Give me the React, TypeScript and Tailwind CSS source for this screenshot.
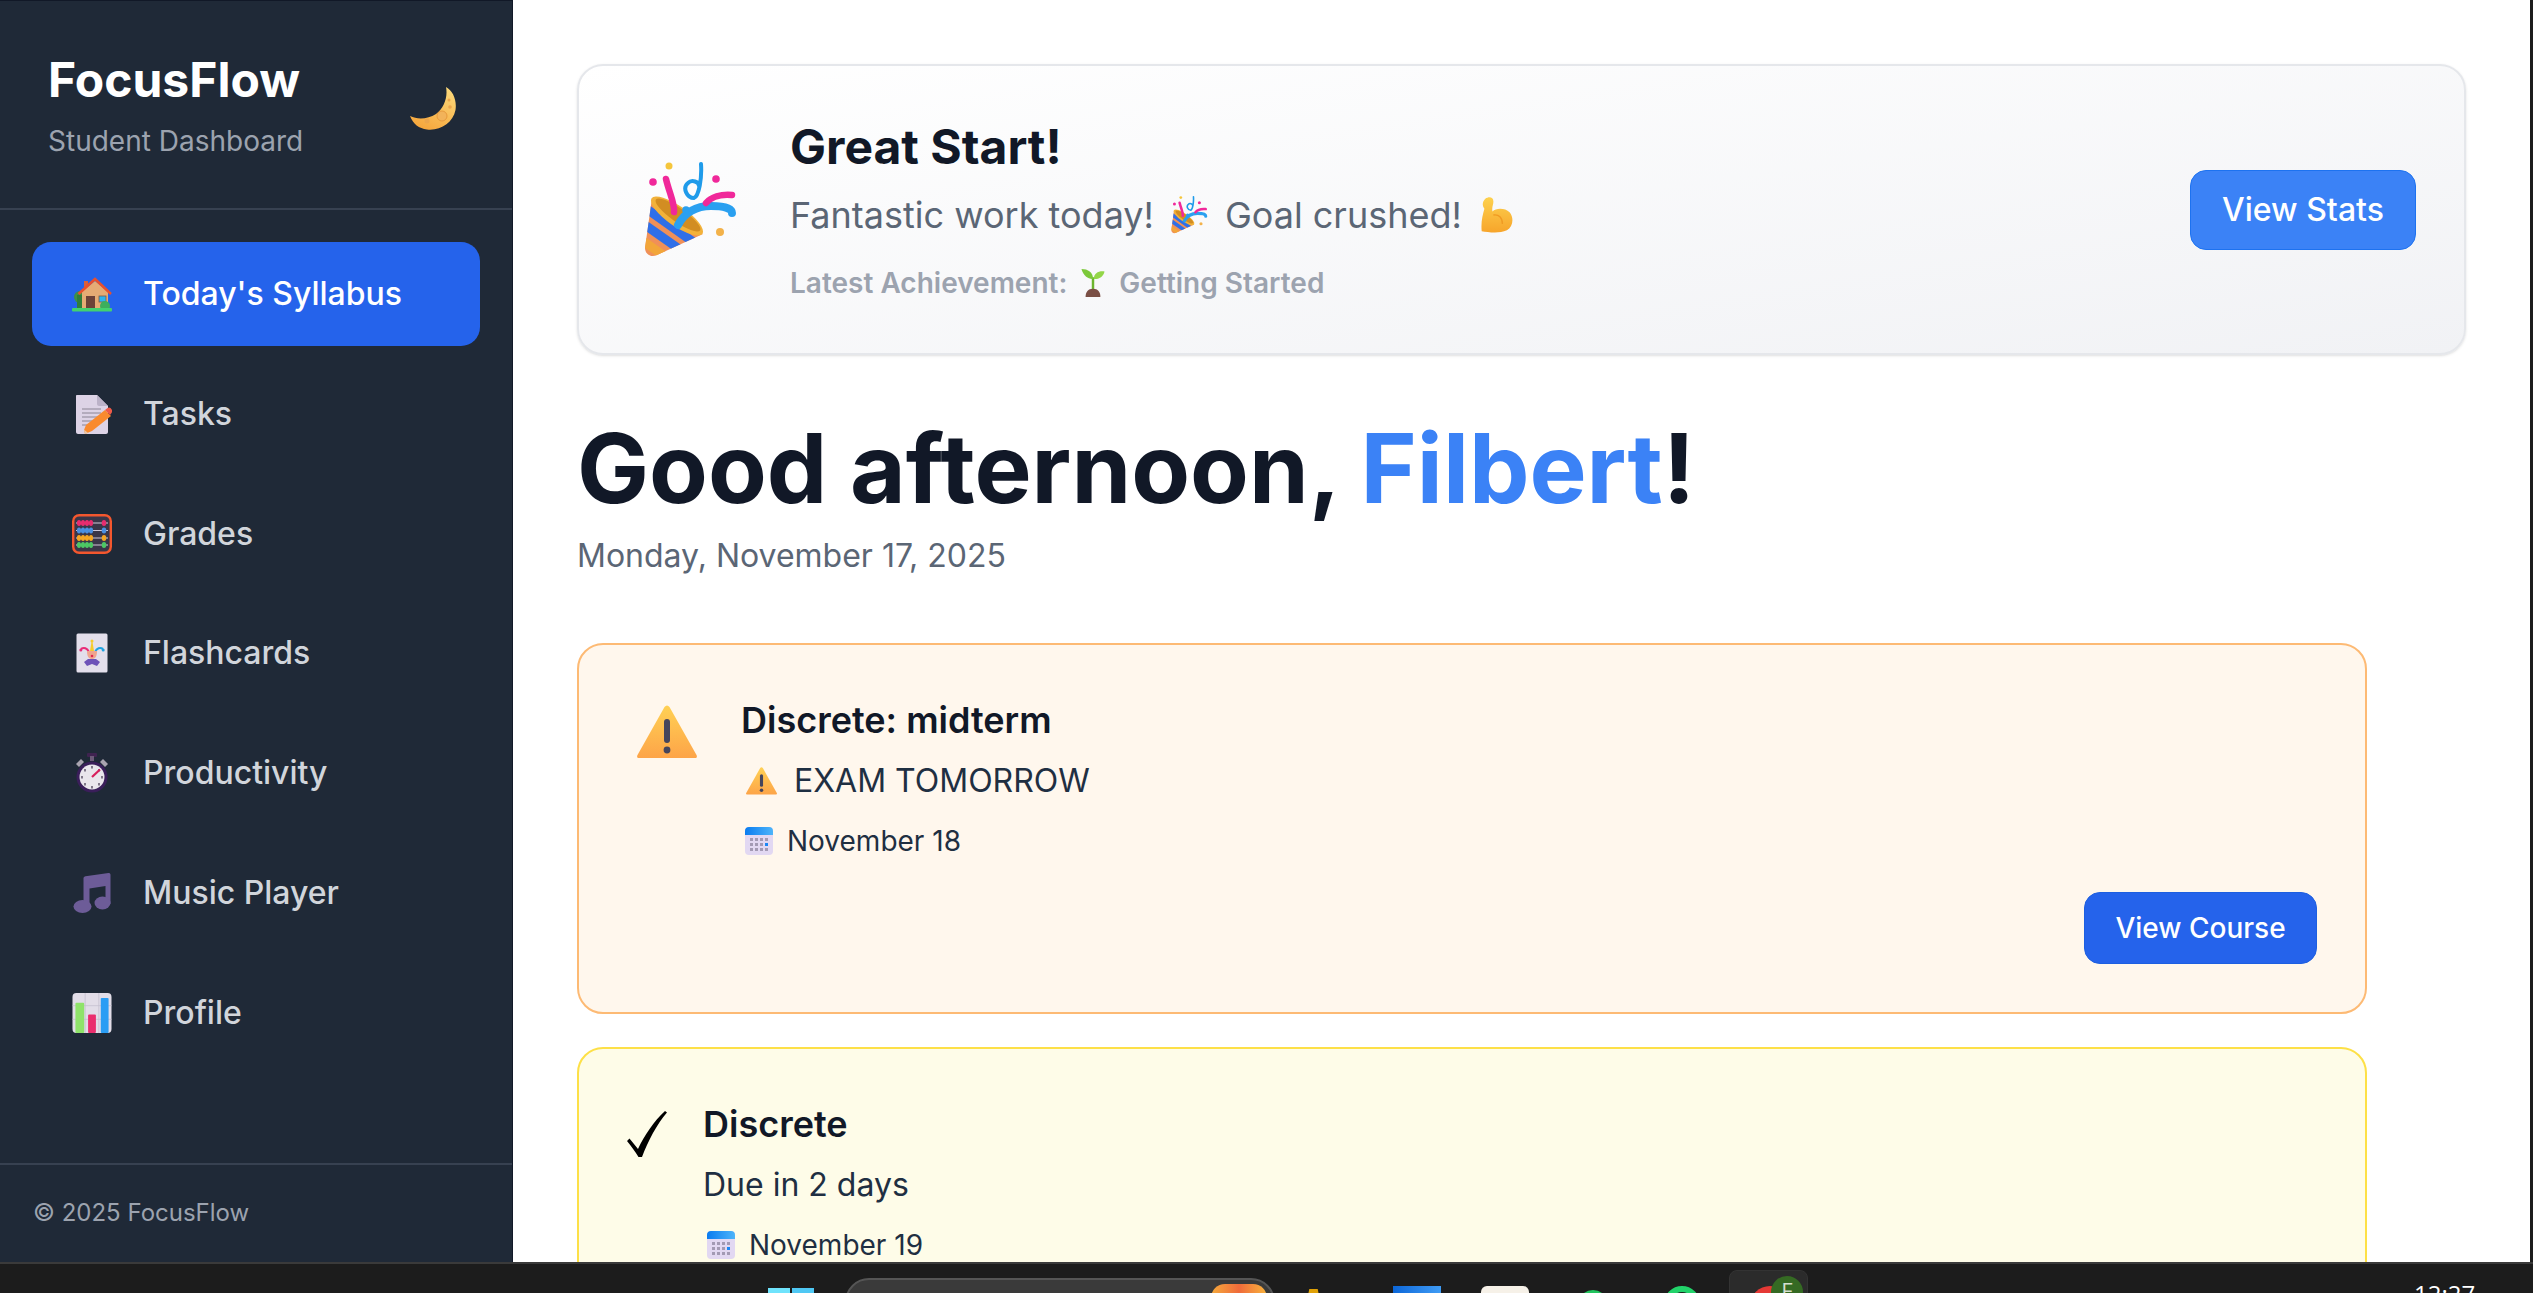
type IconProps = { className?: string };

function Moon({ className }: IconProps) {
  return (
    <svg viewBox="0 0 46 43" className={className}>
      <defs>
        <linearGradient id="moon" x1="0.8" y1="0" x2="0.3" y2="1">
          <stop offset="0" stopColor="#fcd97a" />
          <stop offset="1" stopColor="#f6a63c" />
        </linearGradient>
      </defs>
      <path d="M36 0C43 4 47 13 45.500 23C43 36 30 44 17 42.500C9 41.500 3 37 0 29C8 33 18 32 26 27C34 21 38 10 36 0Z" fill="url(#moon)" />
      <circle cx="32" cy="29" r="5" fill="#f2b35a" stroke="#e79a3c" strokeWidth="1" />
      <circle cx="17" cy="34" r="2.500" fill="#eda64c" />
      <circle cx="40" cy="20" r="1.800" fill="#eda64c" />
      <circle cx="39" cy="13" r="1.500" fill="#eda64c" />
    </svg>
  );
}

function House({ className }: IconProps) {
  return (
    <svg viewBox="0 2 40 35" className={className}>
      <circle cx="8" cy="22" r="6" fill="#3f8f46" />
      <rect x="5" y="20" width="6" height="13" fill="#2f7d3c" />
      <rect x="12" y="6" width="4" height="10" fill="#d9603a" />
      <path d="M10 17L23 6L36 17V34H10Z" fill="#e6ab74" />
      <path d="M6.500 19L23 4L39 19" fill="none" stroke="#e9502c" strokeWidth="2.500" />
      <rect x="14" y="21" width="9" height="13" fill="#6d4238" />
      <rect x="27" y="21" width="7" height="6" fill="#2db4ee" stroke="#7d5a44" strokeWidth="0.800" />
      <circle cx="33" cy="31" r="5" fill="#3dae5c" />
      <rect x="0" y="33" width="40" height="3.500" rx="1" fill="#43d16f" />
    </svg>
  );
}

function Memo({ className }: IconProps) {
  return (
    <svg viewBox="0 0 40 40" className={className}>
      <path d="M5 1H25L36 12V38C36 39 35 40 34 40H6C5 40 4 39 4 38V2C4 1 4.500 1 5 1Z" fill="#ddd3e6" />
      <path d="M25 1L36 12H27C26 12 25 11 25 10Z" fill="#bcb2c8" />
      <path d="M10 15H29M10 19H29M10 23H26M10 27H20M10 31H15" stroke="#8b8494" strokeWidth="1" />
      <path d="M12 36L14 31L33 16L39 22L20 37L13 40Z" fill="#f98a2e" />
      <path d="M33 16L35.500 14C36.500 13.200 37.500 13.200 38.500 14L40 16C40.500 17 40.500 18 39.500 19L38 21Z" fill="#ef5a48" />
      <path d="M13 40L12 35.500L16 39Z" fill="#e8c8a8" />
    </svg>
  );
}

function Abacus({ className }: IconProps) {
  const rows = [
    { y: 9, color: "#e82c6f" },
    { y: 16.500, color: "#4a90e2" },
    { y: 24, color: "#f5a623" },
    { y: 31, color: "#4cc764" },
  ];
  return (
    <svg viewBox="0 0 40 40" className={className}>
      <rect x="1.200" y="1.200" width="37.600" height="37.600" rx="6" fill="#3a3648" stroke="#f4572e" strokeWidth="2.400" />
      {rows.map((row) => (
        <g key={row.y}>
          <rect x="4" y={row.y - 0.5} width="32" height="1" fill="#cfc8d8" />
          {[7, 11, 15, 19].map((x) => (
            <ellipse key={x} cx={x} cy={row.y} rx="2.100" ry="2.900" fill={row.color} />
          ))}
          <ellipse cx="32" cy={row.y} rx="2.300" ry="2.900" fill={row.color} />
        </g>
      ))}
    </svg>
  );
}

function Joker({ className }: IconProps) {
  return (
    <svg viewBox="0 0 32 40" className={className}>
      <rect x="0.500" y="0.500" width="31" height="39" rx="1.500" fill="#e3dfeb" />
      <path d="M13 19C11 15 8 14 5 16" fill="none" stroke="#e92c78" strokeWidth="2.200" />
      <path d="M19 19C21 15 24 14 27 16" fill="none" stroke="#1fa2e0" strokeWidth="2.200" />
      <path d="M14 18L15.500 9H16.500L18 18Z" fill="#f5cc2b" />
      <circle cx="4.800" cy="17" r="1.500" fill="#e92c78" />
      <circle cx="27.200" cy="17" r="1.500" fill="#1fa2e0" />
      <circle cx="16" cy="8" r="1.500" fill="#f5cc2b" />
      <path d="M11 18H21C21 24 19 26 16 26C13 26 11 24 11 18Z" fill="#f0a58e" />
      <path d="M8 29L12 26H20L24 29L21 33L16 31L11 33Z" fill="#6d52b8" />
      <circle cx="16" cy="23" r="1.300" fill="#e02c50" />
    </svg>
  );
}

function Stopwatch({ className }: IconProps) {
  return (
    <svg viewBox="0 0 32 40" className={className}>
      <rect x="11" y="0" width="10" height="4" rx="1" fill="#3f2350" />
      <rect x="14" y="3" width="4" height="5" fill="#6c5a78" />
      <path d="M0 11L5 6L8 9L3 14Z" fill="#a9a4b0" />
      <path d="M32 11L27 6L24 9L29 14Z" fill="#a9a4b0" />
      <circle cx="16" cy="24" r="15.500" fill="#3a1e5a" />
      <circle cx="16" cy="24" r="12.500" fill="#e9e6ec" />
      {[[16, 14], [16, 34], [6, 24], [26, 24], [9, 17], [23, 31], [9, 31], [23, 17]].map(([x, y]) => (
        <rect key={`${x}-${y}`} x={x - 1} y={y - 1} width="2" height="2.500" fill="#7f7788" />
      ))}
      <path d="M16 24L24 16.500" stroke="#d81e5b" strokeWidth="2.200" />
    </svg>
  );
}

function Notes({ className }: IconProps) {
  return (
    <svg viewBox="0 0 37 40" className={className}>
      <path d="M10 5C10 4 11 3.500 12 3.200L35 0C36 0 37 0.500 37 2V31H32V13L16 15.500V34H10Z" fill="#6d5c98" />
      <ellipse cx="9" cy="33.500" rx="9" ry="6.500" fill="#6d5c98" />
      <ellipse cx="29" cy="30" rx="8" ry="6.500" fill="#6d5c98" />
    </svg>
  );
}

function BarChart({ className }: IconProps) {
  return (
    <svg viewBox="0 0 40 41" className={className}>
      <rect width="40" height="41" rx="4" fill="#e2dde8" />
      <path d="M13 0V41M27 0V41M0 13H40M0 27H40" stroke="#c4bece" strokeWidth="0.800" />
      <rect x="3" y="10" width="9" height="31" rx="1" fill="#8fe36a" />
      <rect x="16" y="22" width="8" height="19" rx="1" fill="#ea2e6e" />
      <rect x="29" y="5" width="8" height="36" rx="1" fill="#2a9df4" />
    </svg>
  );
}

function Popper({ className, id }: IconProps & { id: string }) {
  return (
    <svg viewBox="0 0 92 96" className={className}>
      <defs>
        <clipPath id={id}>
          <path d="M7 36L58 72L12 93C6 96 0 92 0 86Z" />
        </clipPath>
      </defs>
      <path d="M7 36L58 72L12 93C6 96 0 92 0 86Z" fill="#f09058" />
      <g clipPath={`url(#${id})`} fill="none" stroke="#2f6fe8" strokeWidth="9">
        <path d="M-35 21L85 106" />
        <path d="M-43 33L77 117" />
        <path d="M-52 44L68 128" stroke="#f2a63a" />
      </g>
      <ellipse cx="32" cy="54" rx="10" ry="31" transform="rotate(-55 32 54)" fill="#f2b23a" />
      <ellipse cx="33" cy="53" rx="7" ry="27" transform="rotate(-55 33 53)" fill="#d28d22" />
      <path d="M29 50C30 42 24 30 21 17" fill="none" stroke="#f0289a" strokeWidth="6.500" strokeLinecap="round" />
      <path d="M33 63C39 52 50 44 66 44C78 44 87 46 87 51" fill="none" stroke="#2aa0f0" strokeWidth="8" strokeLinecap="round" />
      <path d="M56 2C57 16 54 34 49 36C42 36 37 26 43 21C47 17 54 20 54 24" fill="none" stroke="#1f9bea" strokeWidth="4" strokeLinecap="round" />
      <path d="M61 41C66 35 76 32 87 33" fill="none" stroke="#f0289a" strokeWidth="6.500" strokeLinecap="round" />
      <circle cx="24" cy="4" r="3.500" fill="#f5c63c" />
      <circle cx="8" cy="20" r="3.800" fill="#f0289a" />
      <circle cx="71" cy="17" r="3.800" fill="#f0289a" />
      <circle cx="41" cy="48" r="3.800" fill="#2aa0f0" />
      <circle cx="75" cy="70" r="4" fill="#f3b24a" />
    </svg>
  );
}

function Muscle({ className }: IconProps) {
  return (
    <svg viewBox="0 0 36 40" className={className}>
      <defs>
        <linearGradient id="muscle" x1="0" y1="0" x2="0" y2="1">
          <stop offset="0" stopColor="#fdd14e" />
          <stop offset="1" stopColor="#f7a52b" />
        </linearGradient>
      </defs>
      <path d="M5 2C9 -1 14 0 14 5C14 9 12 11 13 16C17 12 27 12 32 17C37 23 36 33 29 37C20 41 8 39 1 38C0 28 2 20 4 13C1 9 2 5 5 2Z" fill="url(#muscle)" />
      <path d="M14 20C20 19 24 23 24 30" fill="none" stroke="#f09a22" strokeWidth="1.500" />
    </svg>
  );
}

function Seedling({ className }: IconProps) {
  return (
    <svg viewBox="0 0 28 34" className={className}>
      <path d="M14 10V26" stroke="#6cb52e" strokeWidth="3" />
      <path d="M13 12C8 12 2 8 0 0C8 0 14 4 14 12Z" fill="#7cc83a" />
      <path d="M15 12C15 5 21 2 28 3C27 9 21 13 15 12Z" fill="#93d648" />
      <path d="M5 34C5 28 8 24 14 24C20 24 23 28 23 34Z" fill="#7a4f45" />
    </svg>
  );
}

function Warning({ className }: IconProps) {
  return (
    <svg viewBox="0 0 60 54" className={className}>
      <defs>
        <linearGradient id="warn" x1="0" y1="0" x2="0" y2="1">
          <stop offset="0" stopColor="#ffd154" />
          <stop offset="1" stopColor="#fda448" />
        </linearGradient>
      </defs>
      <path d="M27.500 2C29 0 31 0 32.500 2L59.500 50C60.500 52 59.500 53 58 53H2C0.500 53 -0.500 52 0.500 50Z" fill="url(#warn)" />
      <rect x="27" y="14" width="6" height="24" rx="3" fill="#45455c" />
      <circle cx="30" cy="45" r="3.400" fill="#45455c" />
    </svg>
  );
}

function CalendarIcon({ className }: IconProps) {
  const cells = [0, 1, 2];
  return (
    <svg viewBox="0 0 28 28" className={className}>
      <defs>
        <linearGradient id="calTop" x1="0" y1="0" x2="1" y2="0">
          <stop offset="0" stopColor="#0a7cf0" />
          <stop offset="1" stopColor="#4db4fa" />
        </linearGradient>
      </defs>
      <rect width="28" height="28" rx="4" fill="#e2d8f2" />
      <path d="M0 8V4C0 1.500 1.500 0 4 0H24C26.500 0 28 1.500 28 4V8Z" fill="url(#calTop)" />
      {cells.map((r) =>
        [0, 1, 2, 3].map((c) => (
          <rect
            key={`${r}-${c}`}
            x={5 + c * 5}
            y={11 + r * 5}
            width="3"
            height="3"
            fill={r === 1 && c === 3 ? "#1b87f5" : "#a39ab4"}
          />
        )),
      )}
    </svg>
  );
}

const navItems = [
  { label: "Today's Syllabus", icon: <House className="h-[35px] w-10" />, active: true },
  { label: "Tasks", icon: <Memo className="w-10 h-10" /> },
  { label: "Grades", icon: <Abacus className="w-10 h-10" /> },
  { label: "Flashcards", icon: <Joker className="w-10 h-10" /> },
  { label: "Productivity", icon: <Stopwatch className="w-10 h-10" /> },
  { label: "Music Player", icon: <Notes className="w-10 h-10" /> },
  { label: "Profile", icon: <BarChart className="w-10 h-10" /> },
];

function Sidebar() {
  return (
    <aside className="flex h-full w-[513px] shrink-0 flex-col border-r border-t border-[#111827] bg-[#1f2937]">
      <div className="flex h-[209px] items-center justify-between border-b-2 border-[#374151] pl-[48px] pr-[56px] pt-[4px]">
        <div>
          <h1 className="text-[48px] leading-[56px] font-bold text-white">FocusFlow</h1>
          <p className="mt-[13px] text-[28px] leading-[40px] text-[#9ca3af]">Student Dashboard</p>
        </div>
        <Moon className="mt-[4px] h-[43px] w-[46px]" />
      </div>
      <nav className="flex flex-1 flex-col gap-[15.750px] px-[32px] pt-[32px]">
        {navItems.map((item) => (
          <a
            key={item.label}
            className={`flex h-[104px] items-center gap-[31px] rounded-[19px] pl-[40px] text-[32px] font-medium ${
              item.active ? "bg-[#2563eb] text-white" : "text-[#d1d5db]"
            }`}
          >
            {item.icon}
            <span>{item.label}</span>
          </a>
        ))}
      </nav>
      <div className="flex h-[99px] items-center border-t-2 border-[#374151] pb-[2px] pl-[33px] text-[24px] text-[#9ca3af]">
        © 2025 FocusFlow
      </div>
    </aside>
  );
}

function Banner() {
  return (
    <section className="flex h-[291px] items-center justify-between rounded-[26px] border-2 border-[#e5e7eb] bg-gradient-to-br from-white to-[#f1f2f5] pl-[66px] pr-[48px] shadow-sm">
      <div className="flex items-center gap-[53px]">
        <Popper id="popperLarge" className="h-[96px] w-[92px]" />
        <div>
          <h2 className="text-[48px] leading-[64px] font-bold text-[#111827]">Great Start!</h2>
          <p className="mt-[8px] flex items-center gap-[17px] text-[36px] leading-[56px] text-[#5b6675]">
            Fantastic work today!
            <Popper id="popperSmall" className="h-[38px] w-[37px]" />
            Goal crushed!
            <Muscle className="h-[36px] w-[36px]" />
          </p>
          <p className="mt-[18px] flex items-center gap-[12px] text-[28px] leading-[44px] font-semibold text-[#9ca3af]">
            Latest Achievement:
            <Seedling className="h-[28px] w-[28px]" />
            Getting Started
          </p>
        </div>
      </div>
      <button className="h-[80px] w-[226px] rounded-[16px] border border-[#1d72f0] bg-[#3b82f6] text-[32px] font-medium text-white">
        View Stats
      </button>
    </section>
  );
}

function ExamCard() {
  return (
    <article className="h-[371px] w-[1790px] rounded-[26px] border-2 border-[#fdba74] bg-[#fff7ed] px-[48px] pt-[48px]">
      <div className="flex gap-[37px]">
        <div className="w-[77px] pl-[10px] pt-[12px]">
          <Warning className="h-[54px] w-[60px]" />
        </div>
        <div>
          <h3 className="text-[36px] leading-[54px] font-semibold text-[#111827]">Discrete: midterm</h3>
          <p className="mt-[10px] flex h-[48px] items-center gap-[16px] pl-[4px] text-[32px] text-[#1f2f42]">
            <Warning className="h-[28px] w-[33px]" />
            EXAM TOMORROW
          </p>
          <p className="mt-[12px] flex h-[48px] items-center gap-[14px] pl-[4px] text-[28px] text-[#1f2f42]">
            <CalendarIcon className="h-[28px] w-[28px]" />
            November 18
          </p>
        </div>
      </div>
      <div className="mt-[27px] flex justify-end">
        <button className="h-[72px] w-[233px] rounded-[16px] border border-[#1d5fe0] bg-[#2563eb] text-[28px] font-medium text-white">
          View Course
        </button>
      </div>
    </article>
  );
}

function DueCard() {
  return (
    <article className="mt-[33px] h-[400px] w-[1790px] rounded-[26px] border-2 border-[#fde047] bg-[#fefce8] px-[48px] pt-[48px]">
      <div className="flex gap-[36px]">
        <svg viewBox="0 0 40 46" className="mt-[14px] h-[46px] w-[40px]">
          <path d="M0 30L2.500 27.500L11 38C17 25 27 10 38 0L40 1.500C30 13 21 30 15 46H11.500C8 40 4 35 0 30Z" fill="#000" />
        </svg>
        <div>
          <h3 className="text-[36px] leading-[54px] font-semibold text-[#111827]">Discrete</h3>
          <p className="mt-[10px] h-[48px] text-[32px] leading-[48px] text-[#1f2f42]">Due in 2 days</p>
          <p className="mt-[12px] flex h-[48px] items-center gap-[14px] pl-[4px] text-[28px] text-[#1f2f42]">
            <CalendarIcon className="h-[28px] w-[28px]" />
            November 19
          </p>
        </div>
      </div>
    </article>
  );
}

function Taskbar() {
  return (
    <footer className="flex h-[31px] shrink-0 items-start overflow-hidden border-t-2 border-[#3a3a3a] bg-[#1c1c1c] font-['Open_Sans',sans-serif]">
      <div className="ml-[768px] mt-[24px] grid h-[46px] w-[46px] grid-cols-2 gap-[2px]">
        <span className="bg-[#6fe3fc]" />
        <span className="bg-[#4fc8f4]" />
      </div>
      <div className="ml-[31px] mt-[14px] flex h-[60px] w-[430px] justify-end rounded-[24px] border-2 border-[#555555] bg-[#3a3a3a] pr-[6px]">
        <span className="mt-[4px] h-[44px] w-[56px] rounded-[14px] bg-gradient-to-r from-[#f4a93c] via-[#ef6a3a] to-[#f7b23c]" />
      </div>
      <span className="ml-[28px] mt-[25px] h-[30px] w-[21px] bg-[#e0a106] [clip-path:polygon(30%_0,70%_0,100%_100%,0_100%)]" />
      <span className="ml-[69px] mt-[22px] h-[30px] w-[48px] bg-gradient-to-r from-[#0a66d8] to-[#3f9cf5]" />
      <span className="ml-[40px] mt-[22px] h-[30px] w-[48px] rounded-t-[6px] bg-[#f6f1e8]" />
      <span className="ml-[49px] mt-[26px] h-[30px] w-[30px] rounded-full bg-[#22c55e]" />
      <span className="ml-[56px] mt-[22px] h-[36px] w-[36px] rounded-full border-[6px] border-[#22d36a]" />
      <div className="relative ml-[29px] mt-[6px] h-[40px] w-[79px] rounded-t-[8px] border border-[#333333] bg-[#2b2b2b]">
        <span className="absolute left-[20px] top-[15px] h-[40px] w-[40px] rounded-full bg-[#e53935]" />
        <span className="absolute left-[41px] top-[5px] flex h-[32px] w-[32px] items-start justify-center rounded-full bg-[#356a23] text-[22px] leading-[28px] text-[#d4dfcf]">
          F
        </span>
      </div>
      <span className="ml-[606px] mt-[14px] text-[24px] leading-[32px] text-white">12:27</span>
    </footer>
  );
}

export default function App() {
  return (
    <div className="flex h-[1293px] w-[2533px] flex-col overflow-hidden bg-white font-['Inter',sans-serif]">
      <div className="flex h-[1262px] shrink-0">
        <Sidebar />
        <main className="min-w-0 flex-1 overflow-hidden p-[64px]">
          <Banner />
          <h1 className="mt-[61px] text-[96px] leading-[104px] font-bold text-[#111827]">
            Good afternoon, <span className="text-[#3b82f6]">Filbert</span>!
          </h1>
          <p className="mt-[12px] text-[32px] leading-[48px] text-[#5b6675]">Monday, November 17, 2025</p>
          <div className="mt-[63px]">
            <ExamCard />
            <DueCard />
          </div>
        </main>
        <div className="w-[3px] shrink-0 bg-[#1c1c1c]" />
      </div>
      <Taskbar />
    </div>
  );
}
